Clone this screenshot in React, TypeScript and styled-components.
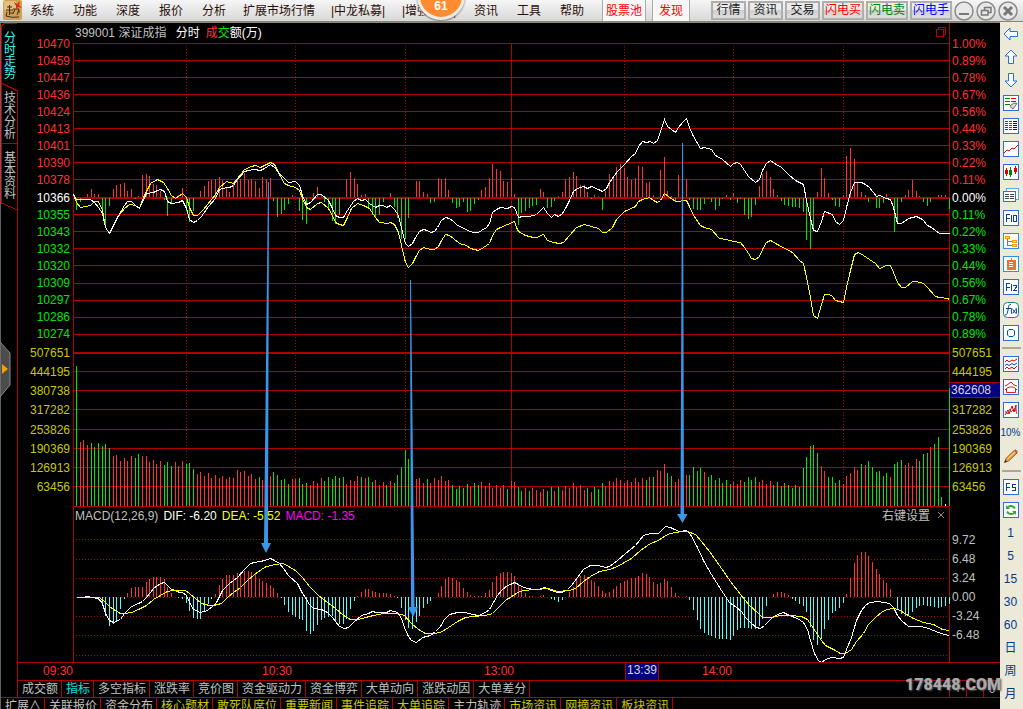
import React from "react";
import styled, { createGlobalStyle } from "styled-components";

const RED = "#b00000";

const GlobalStyle = createGlobalStyle`
  * { box-sizing: border-box; }
  html, body, #root { margin: 0; height: 100%; }
  body {
    background: #000;
    font: 12px/16px "Liberation Sans", "Noto Sans CJK SC", sans-serif;
    overflow: hidden;
  }
  button {
    font: inherit;
    color: inherit;
    background: none;
    border: 0;
    padding: 0;
    margin: 0;
    white-space: nowrap;
  }
`;

/* ---------- series data ---------- */

type Pt = [number, number];
type Run = { x: number; y: number; pts: number[] };

/* Samples are stored per run, in thirds of a pixel from the run's origin. */
const unpack = (runs: Run[]): Pt[] => {
  const out: Pt[] = [];
  runs.forEach((r) => {
    for (let i = 0; i < r.pts.length; i += 2) {
      const x = r.x + r.pts[i] / 3;
      if (!out.length || x > out[out.length - 1][0]) out.push([x, r.y + r.pts[i + 1] / 3]);
    }
  });
  return out;
};

const at = (pts: Pt[], x: number): number => {
  if (x <= pts[0][0]) return pts[0][1];
  for (let i = 1; i < pts.length; i++) {
    const [ax, ay] = pts[i - 1];
    const [bx, by] = pts[i];
    if (x <= bx) return ay + ((by - ay) * (x - ax)) / (bx - ax);
  }
  return pts[pts.length - 1][1];
};

const toPoints = (pts: Pt[]) =>
  pts.map(([x, y]) => `${Math.round(x) + 0.5},${Math.round(y) + 0.5}`).join(" ");

const priceLine = unpack([
  { x: 70, y: 130, pts: [10,192,19,207,31,206,60,206,73,215,85,231,97,248,106,292,118,308,130,285,142,262,163,225,172,212,184,212,196,224,206,234,217,212,229,190,250,186,262,180,271,178,283,183,292,212,304,218,325,216,337,209,349,235,358,268,370,276,382,270,394,258,415,228,436,205,448,177,469,170,478,171,490,165,502,147,523,123,535,121,553,118,571,121,583,113,601,103,613,110,628,130,655,157,676,154,688,165,697,195,709,222,721,216,742,193,754,193,775,210,787,235,796,255,808,262,820,262,832,240,850,213,862,205,874,210,886,206,898,220,916,230,928,225] },
  { x: 380, y: 100, pts: [10,314,19,321,31,314,43,328,54,346,64,385,76,430,85,438,97,430,106,410,118,393,130,388,142,390,151,396,163,393,172,380,184,360,196,352,208,353,218,364,232,374,246,380,262,390,280,395,295,397,304,391,318,380,328,370,337,336,349,328,361,320,382,325,394,317,403,320,409,335,415,350,427,347,448,349,469,343,490,322,502,340,514,351,523,343,535,348,547,340,556,325,568,300,580,273,592,263,610,258,622,264,634,257,655,266,667,273,679,263,688,245,712,212,733,192,754,168,766,160,775,138,787,122,799,126,811,124,820,129,832,120,841,92] },
  { x: 660, y: 100, pts: [13,58,22,78,34,88,46,96,55,80,67,65,79,53,88,80,100,108,121,145,133,142,154,148,166,165,187,178,211,198,220,190,232,186,241,192,253,210,265,228,286,246,298,237,307,210,319,188,331,181,343,189,364,202,385,222,406,240,430,252,439,300,451,355,460,390,472,393,484,362,493,334,517,343,526,363,538,373,550,360,559,320,571,275,583,245,604,247,616,251,628,262,649,287,658,284,679,293,691,297,700,320,712,370,724,370,745,355,769,348,787,358,802,376,814,382,838,400,867,400] },
]);

const averageLine = unpack([
  { x: 70, y: 130, pts: [10,192,19,215,31,232,60,226,73,212,85,212,97,240,106,290,118,310,130,288,142,262,163,235,178,222,196,226,206,235,220,200,240,158,262,148,280,155,292,175,304,195,316,203,337,190,349,200,358,232,370,254,382,256,400,236,436,192,448,170,469,154,490,160,502,143,523,118,544,107,556,106,571,112,589,102,601,97,613,103,628,132,643,160,655,165,676,170,688,180,697,205,709,232,721,236,742,220,754,217,775,235,787,255,796,275,808,283,820,284,832,262,844,235,862,220,880,224,898,235,916,262,928,276] },
  { x: 380, y: 100, pts: [0,367,22,370,31,366,43,372,54,396,64,435,76,485,85,501,97,490,106,470,118,449,130,442,151,448,163,447,175,438,184,420,196,403,208,404,218,414,238,429,258,436,271,445,295,450,310,440,328,428,337,404,349,388,361,380,382,373,403,364,409,380,415,392,436,405,460,410,469,411,490,403,502,420,520,427,536,430,550,426,568,405,589,381,613,371,634,378,655,383,667,397,679,396,697,380,709,358,733,334,766,319,775,303,787,296,808,292,820,299,832,306,841,300] },
  { x: 660, y: 100, pts: [13,279,25,288,46,303,79,301,88,318,100,345,121,376,133,381,154,386,178,414,199,416,220,424,241,427,253,442,265,460,274,474,286,478,298,468,307,448,319,427,331,420,352,431,397,456,418,480,430,490,439,530,451,590,460,646,472,654,484,612,493,583,508,583,517,588,526,600,550,605,559,560,571,510,583,463,595,457,610,466,637,484,646,490,658,505,679,496,691,496,700,515,712,545,724,562,736,562,757,544,769,544,790,550,800,562,826,589,838,592,862,593,867,596] },
]);

const difLine = unpack([
  { x: 70, y: 500, pts: [18,292,40,291,52,289,64,292,85,295,97,310,106,338,118,360,130,367,151,358,163,340,184,317,205,310,217,303,229,290,250,265,271,250,283,245,292,255,304,266,316,271,328,275,337,276,349,285,358,305,370,327,391,336,412,330,430,315,439,305,448,287,457,270,478,248,502,232,523,207,541,190,553,185,571,183,583,179,601,175,613,180,628,188,640,203,655,224,682,250,697,278,706,292,718,312,730,323,754,328,772,336,787,352,796,364,808,377,823,385,835,381,850,365,874,345,895,338,907,333,918,337,949,335,961,331,982,336,994,355,1003,380,1015,408,1024,420,1039,425,1057,411,1081,404,1096,394,1111,377,1123,358,1138,343,1160,335,1186,335,1207,342,1225,344,1246,336,1258,328,1270,305,1282,285,1297,268,1312,256] },
  { x: 510, y: 500, pts: [0,252,13,247,25,253,40,261,70,267,85,267,103,262,124,270,142,276,157,276,172,268,184,256,202,230,220,208,241,196,265,196,286,202,298,199,322,180,346,160,376,135,400,105,420,99,445,100,466,79,481,80,493,87,508,94,529,91,541,102,562,140,580,180,604,223,634,270,658,305,679,322,694,333,706,352,724,368,739,382,751,383,763,376,787,350,800,342,820,337,838,344,862,354,880,366,892,388,901,420,913,460,925,480,934,486,946,478,964,472,988,475,1000,470,1009,446,1024,410,1039,360,1054,330,1066,315,1078,306,1105,304,1138,310,1150,320,1162,345,1174,361,1195,378,1216,379,1234,377,1255,383,1285,395,1303,402,1317,404] },
]);

const deaLine = unpack([
  { x: 70, y: 500, pts: [18,292,60,290,88,292,106,305,118,317,130,328,151,338,163,340,184,335,205,326,229,315,250,298,271,284,292,272,310,269,345,271,358,278,376,294,394,310,418,316,430,315,454,308,472,292,490,277,511,262,532,240,553,222,574,207,589,199,616,191,640,190,655,197,676,210,697,231,718,258,745,285,772,306,796,324,820,345,841,357,865,357,886,350,910,345,940,340,982,338,1003,345,1024,368,1045,388,1066,398,1090,400,1111,396,1135,380,1160,363,1186,351,1210,347,1246,345,1267,338,1288,317,1309,298] },
  { x: 510, y: 500, pts: [0,292,20,276,40,269,75,268,115,265,142,272,178,270,196,264,220,244,241,228,268,212,298,208,322,199,364,175,391,150,420,128,445,119,466,105,481,98,514,94,532,94,556,101,574,124,598,152,628,195,661,243,691,283,718,316,745,340,757,350,787,352,808,346,840,344,874,348,892,358,910,384,934,420,946,434,970,448,991,458,1006,460,1024,448,1039,424,1060,400,1075,372,1096,350,1117,333,1132,326,1150,324,1165,328,1189,343,1210,355,1240,366,1270,373,1297,386,1317,391] },
]);

const macdEnvelope = unpack([
  { x: 70, y: 0, pts: [18,0,76,0,85,-10,97,-27,106,-58,118,-86,130,-80,139,-72,151,-36,163,-6,172,13,184,27,196,31,205,29,217,31,229,45,238,55,250,59,262,61,271,60,283,55,292,30,304,13,316,0,325,-3,337,-7,349,-18,358,-42,370,-64,382,-67,391,-65,403,-46,415,-22,424,-7,436,10,448,36,457,55,469,65,478,67,490,66,502,72,523,79,535,79,544,75,556,68,568,54,577,48,589,42,601,36,610,27,622,12,634,-3,643,-25,655,-45,667,-54,676,-59,697,-70,709,-103,721,-110,730,-103,742,-84,754,-68,763,-64,787,-58,796,-75,808,-80,820,-80,832,-62,841,-36,853,-12,862,3,874,16,886,25,898,25,907,18,920,12,943,12,964,8,976,3,982,-4,994,-32,1006,-70,1015,-92,1027,-95,1039,-76,1048,-56,1060,-33,1072,-20,1081,-12,1093,0,1105,12,1114,34,1126,55,1135,61,1147,58,1159,52,1171,42,1180,28,1192,15,1201,6,1213,4,1234,4,1246,12,1258,22,1267,45,1279,62,1291,72,1300,76,1312,74] },
  { x: 510, y: 0, pts: [4,72,13,64,25,40,37,22,46,12,58,4,79,0,100,6,112,1,124,-7,133,-8,145,-14,157,-10,166,0,178,14,190,30,199,50,211,64,223,66,232,60,244,52,253,46,265,32,277,18,286,12,298,14,310,24,319,32,331,42,343,48,352,52,364,56,376,58,388,66,397,73,409,70,421,58,430,46,442,38,454,42,463,55,475,46,484,30,496,12,505,3,520,0,529,4,538,-10,550,-38,562,-68,571,-96,583,-108,604,-118,628,-126,661,-128,670,-118,682,-100,694,-92,706,-92,724,-97,736,-95,748,-88,760,-60,769,-28,780,0,790,10,802,16,820,15,832,7,841,0,856,-13,868,-20,880,-27,892,-50,901,-90,910,-128,922,-145,934,-125,943,-95,955,-70,964,-50,976,-42,988,-34,1000,-18,1009,10,1021,58,1033,102,1042,126,1054,136,1066,136,1075,124,1087,105,1099,84,1108,68,1120,50,1132,38,1141,25,1153,0,1162,-35,1174,-52,1186,-56,1195,-58,1207,-45,1219,-34,1228,-27,1240,-24,1261,-28,1288,-32,1303,-30,1318,-22] },
]);

/* x, signed height: positive rises in red, negative falls in green */
const momentum = [
  76,-12,80,-4,87,3,91,8,94,3,98,3,102,-12,105,-27,109,-8,113,8,116,12,120,13,124,14,127,6,131,8,135,-1,138,1,142,22,146,23,149,21,153,13,156,12,160,6,164,-2,167,-18,171,-6,175,-1,178,2,182,9,186,-13,189,-24,193,-13,200,6,204,11,208,16,211,17,215,18,219,20,222,17,226,9,229,5,233,15,237,18,240,18,244,24,248,17,251,18,255,16,259,9,262,20,266,18,270,19,273,-3,277,-19,281,-16,284,-12,288,-6,292,2,299,-13,302,-22,306,-26,313,4,317,10,321,2,324,-4,328,-11,332,-23,335,-26,339,-17,346,18,350,25,354,19,357,13,361,2,365,3,368,-10,372,-17,375,-19,379,-17,383,-4,390,4,394,-9,397,-20,401,-41,405,-41,408,-20,416,16,419,16,423,5,427,3,430,-5,434,-4,438,19,441,18,445,19,448,7,452,-5,456,-10,459,-9,463,-4,467,-14,470,-13,474,-6,478,-2,481,7,485,10,489,19,492,33,496,28,500,26,503,16,507,15,511,19,514,3,518,-27,521,-15,525,-13,529,-10,532,-8,536,-7,540,8,543,5,547,-10,551,-9,554,-3,558,1,562,5,565,18,569,20,573,25,576,21,580,12,584,12,587,5,591,-1,594,2,598,1,602,-12,605,6,609,23,613,19,616,30,620,33,624,29,627,20,631,17,635,19,638,31,642,30,646,14,649,15,653,2,657,-1,660,27,664,40,667,6,671,1,675,-3,678,22,682,30,686,18,689,-2,693,-11,697,-12,700,-12,704,-6,708,-1,711,-4,715,-12,719,-8,722,-1,726,2,730,-2,733,4,737,-5,740,-1,744,-17,748,-21,751,-19,755,-7,759,11,762,23,766,26,770,20,773,8,777,2,781,-3,784,-7,788,-8,792,-9,795,-9,799,-10,803,-14,806,-42,810,-51,813,-32,817,5,821,29,824,19,828,4,832,-2,835,-8,839,-9,843,2,846,41,850,49,854,38,857,15,861,5,865,2,868,-4,876,-10,879,-10,883,-5,886,3,894,-34,897,-25,901,-4,905,2,908,7,912,17,916,6,919,1,923,-4,927,-8,930,-4,938,2,941,2,945,2,949,-11,
];

const volumeTops: Pt[] = [
  [76,366],[79,440],[90,446],[100,446],[109,448],[113,453],[122,460],[130,457],[142,454],[150,461],[160,463],[172,465],[186,464],[195,471],[212,475],[230,478],[240,470],[248,475],[260,480],[275,474],[290,482],[295,476],[306,484],[320,480],[340,477],[347,484],[365,475],[380,483],[395,481],[400,468],[405,452],[409,458],[413,476],[425,483],[440,479],[455,486],[480,483],[492,486],[507,488],[514,481],[518,490],[532,491],[547,488],[562,488],[575,485],[590,491],[602,486],[620,480],[640,479],[650,478],[657,472],[664,466],[672,480],[682,482],[693,470],[704,472],[720,479],[733,483],[751,478],[762,482],[780,486],[800,484],[806,454],[813,442],[817,454],[824,472],[835,481],[843,483],[850,472],[868,464],[880,472],[890,474],[897,459],[910,465],[923,456],[930,449],[938,437],[941,497],[945,504],[949,388],
];

const minuteX = Array.from({ length: 240 }, (_, i) => Math.floor(73 + 3.65 * (i + 1)));

const bar = (x: number, y1: number, y2: number) => `M${x + 0.5} ${y1}V${y2}`;

const momentumPath = (up: boolean) => {
  let d = "";
  for (let i = 0; i < momentum.length; i += 2) {
    const v = momentum[i + 1];
    if (up && v > 0) d += bar(momentum[i], 197 - v, 197);
    if (!up && v < 0) d += bar(momentum[i], 198, 198 - v);
  }
  return d;
};

const volumePath = (up: boolean) =>
  minuteX
    .filter((x) => {
      const rising = x < 944 && x > 77 && at(priceLine, x) <= at(priceLine, x - 4) + ((x * 7) % 5 === 0 ? 3 : 0);
      return rising === up;
    })
    .map((x) => {
      const jitter = x > 79 && x < 935 ? ((x * 13) % 7) - 3 : 0;
      return bar(x, Math.round(at(volumeTops, x)) + jitter, 506);
    })
    .join("");

const macdPath = (up: boolean) =>
  minuteX
    .map((x) => {
      const v = Math.round(at(macdEnvelope, x + 0.3)) || 0;
      if (v === 0 || v > 0 !== up) return "";
      return bar(x, 597, 597 - v);
    })
    .join("");

const h = (ys: number[]) => ys.map((y) => `M73 ${y + 0.5}H949`).join("");
const v = (xs: number[]) => xs.map((x) => `M${x + 0.5} 43V506`).join("");

const priceGrid = [43, 60, 77, 94, 111, 128, 145, 162, 179, 214, 231, 248, 265, 283, 300, 317, 334];
const volumeGrid = [371, 390, 409, 429, 448, 467, 486, 506];
const macdGrid = [539, 559, 578, 597, 616, 635, 655];

/* ---------- menu bar ---------- */

const Window = styled.div`
  display: flex;
  flex-direction: column;
  width: 100%;
  height: 100vh;
  overflow: hidden;
  background: #000;
`;

const MenuBar = styled.header`
  display: flex;
  flex: none;
  align-items: stretch;
  height: 23px;
  padding-left: 3px;
  color: #2c0f0a;
  background: linear-gradient(#f6f6f6, #d8d8d8);
  border-bottom: 2px solid #8a8676;
`;

const Menu = styled.nav`
  display: flex;
  gap: 15px;
  padding-left: 6px;
`;

const MenuItem = styled.button<{ $wide?: boolean }>`
  position: relative;
  min-width: ${(p) => (p.$wide ? 56 : 28)}px;
`;

const Badge = styled.span`
  position: absolute;
  top: -28px;
  left: 16px;
  width: 48px;
  height: 48px;
  padding-top: 24px;
  border: 3px solid #f2ece6;
  border-radius: 50%;
  background: #ff8c2e;
  box-shadow: 0 1px 2px #777;
  color: #fff;
  font-weight: bold;
  line-height: 14px;
`;

const Pins = styled.div`
  display: flex;
  gap: 6px;
  margin-left: 16px;
  color: #f00;
`;

const Pin = styled.button`
  padding: 0 3px;
  background: #f8f8f8;
  border: solid #aaa;
  border-width: 0 1px;
  &:last-child { padding: 0 6px; }
`;

const Actions = styled.div`
  display: flex;
  gap: 2px;
  align-items: center;
  margin-left: auto;
  padding-right: 5px;
`;

const Action = styled.button<{ $color: string }>`
  height: 19px;
  width: ${(p) => (p.$color === "#222" ? 35 : 42)}px;
  border: 2px solid #aeaeae;
  background: linear-gradient(#ececec 50%, #cfcfcf 50%, #dedede);
  color: ${(p) => p.$color};
  line-height: 15px;
`;

const RoundButton = styled.button`
  width: 20px;
  height: 20px;
  svg { display: block; }
`;

/* ---------- frame ---------- */

const Body = styled.div`
  display: flex;
  flex: 1;
  min-height: 0;
`;

const Workspace = styled.div`
  display: flex;
  flex: 1;
  flex-direction: column;
  min-width: 0;
  border-left: 1px solid #606060;
`;

const Upper = styled.div`
  display: flex;
  flex: 1;
  min-height: 0;
`;

const SideTabs = styled.nav`
  position: relative;
  display: flex;
  flex: none;
  flex-direction: column;
  width: 17px;
  gap: 12px;
  padding-top: 9px;
`;

const SideFrame = styled.svg`
  position: absolute;
  top: 0;
  left: 0;
  width: 17px;
  height: 100%;
`;

const SideTab = styled.button<{ $active?: boolean }>`
  position: relative;
  width: 12px;
  margin-left: 3px;
  color: ${(p) => (p.$active ? "#3cf0f0" : "#c0c0c0")};
  line-height: 12px;
  white-space: normal;
  word-break: break-all;
`;

const Handle = styled.button`
  position: absolute;
  top: 319px;
  left: -1px;
  height: 56px;
  svg { display: block; }
`;

const Main = styled.main`
  display: flex;
  flex: 1;
  flex-direction: column;
  min-width: 0;
`;

const TitleRow = styled.div`
  display: grid;
  flex: none;
  grid-template-columns: 55px 1fr 50px;
  height: 20px;
`;

const Title = styled.h1`
  display: flex;
  gap: 6px;
  grid-column: 2;
  margin: 0;
  padding: 2px 2px 0;
  border-right: 1px solid ${RED};
  color: #c0c0c0;
  font: inherit;
  svg { margin: 1px 0 0 auto; }
`;

const Ink = styled.span<{ $color: string }>`
  color: ${(p) => p.$color};
`;

const Chart = styled.section`
  display: grid;
  flex: 1;
  grid-template-columns: 55px 1fr 50px;
  min-height: 0;
`;

const Plot = styled.div`
  position: relative;
  min-height: 0;
`;

const PlotSvg = styled.svg`
  position: absolute;
  width: 100%;
  height: 100%;
`;

const Legend = styled.div`
  position: absolute;
  top: 75%;
  right: 4px;
  left: 2px;
  display: flex;
  gap: 5px;
  padding-top: 1px;
  color: #c0c0c0;
`;

const LegendTools = styled.div`
  display: flex;
  gap: 6px;
  margin-left: auto;
`;

const Axis = styled.div<{ $side: "left" | "right" }>`
  display: grid;
  grid-template-rows: 308fr 154fr 33fr 115fr 17fr;
  min-height: 0;
  margin-top: -8px;
  text-align: ${(p) => (p.$side === "left" ? "right" : "left")};
`;

const Scale = styled.div`
  display: flex;
  flex-direction: column;
  min-height: 0;
  &:nth-child(3) { grid-row: 4; }
`;

const Tick = styled.div<{ $color: string }>`
  display: flex;
  flex: 1;
  flex-direction: column;
  justify-content: center;
  min-height: 0;
  padding: 0 3px 0 2px;
  color: ${(p) => p.$color};
`;

const CursorTick = styled.div`
  flex: 1;
  min-height: 0;
  color: #d8d8d8;
  span {
    display: block;
    height: 16px;
    padding-left: 1px;
    border: solid ${RED};
    border-width: 1px 0;
    background: #000080;
    line-height: 14px;
  }
`;

const TimeAxis = styled.div`
  display: grid;
  flex: none;
  grid-template-columns: 25px 219fr 222fr 141fr 77fr 298fr;
  height: 18px;
  border-top: 1px solid ${RED};
  color: #ff3232;
  line-height: 17px;
  span:first-child { grid-column: 2; }
`;

const CursorTime = styled.span`
  justify-self: start;
  padding: 0 1px;
  border: solid ${RED};
  border-width: 0 1px;
  background: #000080;
  color: #d8d8d8;
  line-height: 15px;
`;

const TabRow = styled.nav`
  display: flex;
  flex: none;
  height: 17px;
  border-top: 1px solid ${RED};
`;

const FootRow = styled(TabRow)`
  height: 12px;
  overflow: hidden;
`;

const Tab = styled.button<{ $color?: string }>`
  height: 16px;
  padding: 0 3px 0 4px;
  border-right: 1px solid ${RED};
  color: ${(p) => p.$color ?? "#c0c0c0"};
  line-height: 16px;
`;

const Zoomers = styled.div`
  position: relative;
  display: flex;
  width: 51px;
  margin-left: auto;
  border-left: 1px solid ${RED};
  color: #d0d0d0;
`;

const ZoomButton = styled.button`
  flex: 1;
  & + & { border-left: 1px solid ${RED}; }
`;

const Watermark = styled.span`
  position: absolute;
  right: -1px;
  bottom: 0;
  color: #a9a9a9;
  font: 900 16px/24px Roboto, "Liberation Sans", sans-serif;
  text-shadow: 1px 1px 2px #555;
  pointer-events: none;
`;

/* ---------- tool strip ---------- */

const ToolStrip = styled.aside`
  display: flex;
  flex: none;
  flex-direction: column;
  width: 23px;
  margin-top: -1px;
  background: #ece9d8;
  color: #003c8c;
`;

const Tool = styled.button<{ $small?: boolean }>`
  flex: none;
  width: 21px;
  height: 23px;
  font-size: ${(p) => (p.$small ? 10 : 12)}px;
  svg { display: block; margin: 0 auto; }
`;

const ToolRule = styled.hr`
  flex: none;
  width: 19px;
  height: 2px;
  margin: 3px 2px;
  border: 0;
  background: #aca899;
`;

const PERIOD_TOOLS = ["1", "5", "15", "30", "60", "日", "周", "月"];

const Frame = ({ children, stroke = "#2a6fe0" }: { children?: React.ReactNode; stroke?: string }) => (
  <svg width="16" height="16" viewBox="0 0 16 16" fill="none" shapeRendering="crispEdges">
    <rect x="0.5" y="0.5" width="15" height="15" fill="#fff" stroke={stroke} />
    {children}
  </svg>
);

const Arrow = ({ turn }: { turn: number }) => (
  <svg width="16" height="16" viewBox="0 0 16 16">
    <path
      d="M1 8L7 2V5.500H14.500V10.500H7V14Z"
      fill="#fff"
      stroke="#2a6fe0"
      transform={`rotate(${turn} 8 8)`}
    />
  </svg>
);

const KeyIcon = ({ path }: { path: string }) => (
  <Frame>
    <path d={path} stroke="#0a3c9c" />
  </Frame>
);

const F_STROKE = "M3.500 12V4.500H7M3.500 8.500H7";

const icons: { name: string; icon: React.ReactNode }[][] = [
  [
    { name: "后退", icon: <Arrow turn={0} /> },
    { name: "向上", icon: <Arrow turn={90} /> },
    { name: "向下", icon: <Arrow turn={270} /> },
    {
      name: "报价设置",
      icon: (
        <Frame>
          <path d="M2 3.500H7M2 6.500H7M2 9.500H7" stroke="#008000" />
          <path d="M8 3.500H13M8 6.500H13" stroke="#e00000" />
          <path d="M7 11.500L10 14L14 8.500L11 8L8 10Z" fill="#ddd" stroke="#666" shapeRendering="auto" />
        </Frame>
      ),
    },
    {
      name: "行情列表",
      icon: (
        <Frame>
          <path d="M2 3.500H5M2 5.500H5M2 7.500H5M2 9.500H5M2 11.500H5" stroke="#d00000" />
          <path d="M6 3.500H9M6 5.500H9M6 7.500H9M6 9.500H9M6 11.500H9" stroke="#008000" />
          <path d="M10 3.500H14M10 5.500H14M10 7.500H14M10 9.500H14M10 11.500H14" stroke="#0000c0" />
        </Frame>
      ),
    },
    { name: "分时图", icon: <Frame><path shapeRendering="auto" d="M1 12L4 9L6 10L9 7L11 8L15 4" stroke="#e00000" /></Frame> },
    {
      name: "K线图",
      icon: (
        <Frame>
          <path d="M3.500 4V12M12.500 2V10" stroke="#e00000" />
          <path d="M2 6H5V10H2ZM11 4H14V8H11Z" fill="#e00000" />
          <path d="M7.500 3V13" stroke="#008000" />
          <path d="M6 6H9V11H6Z" fill="#008000" />
        </Frame>
      ),
    },
    {
      name: "多窗口",
      icon: (
        <svg width="16" height="16" viewBox="0 0 16 16" fill="#fff" shapeRendering="crispEdges">
          <path d="M3.500 4V1.500H15.500V12.500H13" stroke="#5fa8e8" />
          <rect x="0.5" y="4.5" width="12" height="10" stroke="#2a6fe0" />
          <path d="M2 7.500H6M7 7.500H11M2 9.500H6M7 9.500H11M2 11.500H6M7 11.500H11" stroke="#444" />
        </svg>
      ),
    },
    { name: "F10 资料", icon: <KeyIcon path={`${F_STROKE}M8.500 5V12M10.500 5.500H13.500V11.500H10.500Z`} /> },
    {
      name: "板块树",
      icon: (
        <Frame stroke="#2a90f0">
          <path d="M4.500 5V12.500H9M4.500 8.500H9" stroke="#777" />
          <path d="M2.500 3.500H6.500V5.500H2.500ZM9.500 7.500H13.500V9.500H9.500ZM9.500 11.500H13.500V13.500H9.500Z" fill="#ffe08a" stroke="#f0a000" />
        </Frame>
      ),
    },
    {
      name: "自选股",
      icon: (
        <Frame stroke="#2a90f0">
          <path d="M8 2V4M4 4H12V13H4Z" fill="#f07030" stroke="#f07030" />
          <path d="M6 6.500H10M6 8.500H10M6 10.500H10" stroke="#fff" />
        </Frame>
      ),
    },
    { name: "F12 交易", icon: <KeyIcon path={`${F_STROKE}M8.500 5V12M10 6.500H13.500V8L10.500 11.500H14`} /> },
    {
      name: "公式",
      icon: (
        <svg width="16" height="16" viewBox="0 0 16 16" fill="none">
          <rect x="0.5" y="0.5" width="15" height="15" rx="4" fill="#fff" stroke="#138080" />
          <path d="M8 2.500C5.500 2 5.500 5 5 8S4 13 2 13M3 6.500H8M9 6Q7.500 9 9 12M13 6Q14.500 9 13 12M10 7.500L12.500 11M12.500 7.500L10 11" stroke="#0a3c9c" />
        </svg>
      ),
    },
    {
      name: "区间统计",
      icon: <Frame><path shapeRendering="auto" d="M6 4.500H10L11.500 6V10L10 11.500H6L4.500 10V6Z" stroke="#0050b0" /></Frame>,
    },
  ],
  [
    {
      name: "叠加走势",
      icon: (
        <Frame>
          <g shapeRendering="auto">
            <path d="M2 6L4 4L6 6L9 4L11 5L14 3M2 13L4 11L6 13L9 11L11 13L14 10" stroke="#e00000" />
            <path d="M2 9.500L4 8L6 9.500L9 7.500L11 9L14 7" stroke="#0040d0" />
          </g>
        </Frame>
      ),
    },
    {
      name: "区域图",
      icon: (
        <Frame>
          <path shapeRendering="auto" d="M2 7L4 6L8 3L11 6L14 7M2 11L4 9L7 8L10 8L12 9L14 11M3.500 10V13.500H12.500V10" stroke="#e02020" />
        </Frame>
      ),
    },
    {
      name: "波动图",
      icon: (
        <Frame>
          <g shapeRendering="auto">
            <path d="M2 13L5 8L6 12L9 4L11 10L13 3V9" stroke="#e00000" />
            <path d="M2 9L4 12L7 7L8 10L12 6L14 12" stroke="#b04040" />
          </g>
        </Frame>
      ),
    },
    { name: "百分比坐标", icon: "10%" },
    {
      name: "画线",
      icon: (
        <svg width="16" height="16" viewBox="0 0 16 16">
          <path d="M1.500 14.500L3 10.500L11 2.500L14 5L5.500 13Z" fill="#f0a040" stroke="#8a5a20" />
          <path d="M11 2.500L12.500 1.200L15 3.700L14 5Z" fill="#d05050" />
          <path d="M1.500 14.500L2.500 12L4 13.500Z" fill="#222" />
          <path d="M4.500 11L12 3.700" stroke="#ffe2a0" />
        </svg>
      ),
    },
  ],
  [
    { name: "F5 切换", icon: <KeyIcon path={`${F_STROKE}M13 5.500H9.500V8.500H12.500V11.500H9`} /> },
    {
      name: "刷新",
      icon: (
        <Frame>
          <g shapeRendering="auto" stroke="#35a835" strokeWidth="2">
            <path d="M12 6.500C10.500 3.500 6.500 3 4.500 5.500M4 9.500C5.500 12.500 9.500 13 11.500 10.500" />
            <path d="M3 3V7H7ZM13 13V9H9Z" fill="#35a835" stroke="none" />
          </g>
        </Frame>
      ),
    },
  ],
];

/* ---------- labels ---------- */

const leftPrice = ["10470","10459","10447","10436","10424","10413","10401","10390","10378","10366","10355","10343","10332","10320","10309","10297","10286","10274"];
const rightPct = ["1.00%","0.89%","0.78%","0.67%","0.56%","0.44%","0.33%","0.22%","0.11%","0.00%","0.11%","0.22%","0.33%","0.44%","0.56%","0.67%","0.78%","0.89%"];
const volumes = ["507651","444195","380738","317282","253826","190369","126913","63456"];
const macdTicks = ["9.72", "6.48", "3.24", "0.00", "-3.24", "-6.48"];

const toneFor = (i: number) => (i < 9 ? "#ff3232" : i === 9 ? "#fff" : "#00e600");

const PriceScale = ({ labels }: { labels: string[] }) => (
  <Scale>
    {labels.map((t, i) => (
      <Tick key={i} $color={toneFor(i)}>{t}</Tick>
    ))}
  </Scale>
);

const Y = "#c8c800";
const footTabs: [string, string?][] = [
  ["扩展∧"], ["关联报价"], ["资金分布"], ["核心题材", Y], ["敢死队席位", Y], ["重要新闻", Y],
  ["事件追踪", Y], ["大单追踪", Y], ["主力轨迹"], ["市场资讯", Y], ["网摘资讯", Y], ["板块资讯", Y],
];
const indicatorTabs = ["成交额", "指标", "多空指标", "涨跌率", "竞价图", "资金驱动力", "资金博弈", "大单动向", "涨跌动因", "大单差分"];

const Logo = () => (
  <svg width="19" height="20" viewBox="0 0 19 20" fill="none">
    <rect width="19" height="20" rx="2" fill="#cfa052" />
    <rect x="1" y="1" width="12" height="9" fill="#e2bf7c" />
    <path d="M4 7H9M6.500 5V12M3 10H10M6.500 12V15M6.500 13H10M4 12L3 16M3 16Q8 18 16 17" stroke="#4a2c18" />
    <path d="M10 9H16L14 15M12 9L10 14M16 10V13" stroke="#4a2c18" />
    <path d="M11 2L14 4L17 1L16 5L19 8L15 7L13 10L13 6Z" fill="#e02818" />
  </svg>
);

const PlotDrawing = () => (
  <PlotSvg viewBox="73 43 877 619" preserveAspectRatio="none" fill="none" aria-label="分时走势图">
    <g shapeRendering="crispEdges">
      <path d={h([...priceGrid, ...volumeGrid])} stroke={RED} />
      <path d="M73 198H949M73 353H949" stroke={RED} strokeWidth="2" />
      <path d={v([186, 295, 405, 624, 733, 843])} stroke={RED} strokeDasharray="1 2" />
      <path d="M511.500 43V506M73.500 43V662M949.500 43V662" stroke={RED} />
      <path d={macdGrid.map((y) => `M76 ${y + 0.5}H948`).join("")} stroke={RED} strokeDasharray="1 2" />
      <path d={momentumPath(true)} stroke="#ff3232" />
      <path d={momentumPath(false)} stroke="#00e600" />
      <path d={volumePath(true)} stroke="#ff3232" />
      <path d={volumePath(false)} stroke="#00e600" />
      <path d="M945.500 504V506" stroke="#fff" />
      <path d={macdPath(true)} stroke="#ff3232" />
      <path d={macdPath(false)} stroke="#54fcfc" />
      <polyline points={toPoints(averageLine)} stroke="#ffff00" />
      <polyline points={toPoints(priceLine)} stroke="#fff" />
      <polyline points={toPoints(difLine)} stroke="#fff" />
      <polyline points={toPoints(deaLine)} stroke="#ffff00" />
    </g>
  </PlotSvg>
);

const PlotArrows = () => (
  <PlotSvg viewBox="73 43 877 619" preserveAspectRatio="none" fill="#3a96e8" aria-hidden="true">
    <path d="M268 182L269 182L268 543H271L266 553L261 543H264Z" />
    <path d="M410 280L411 280L414.500 607H418L413 617L408 607H411Z" />
    <path d="M682 143L683 143L684 514H687.500L682.500 523L677 514H680.500Z" />
  </PlotSvg>
);

export default function App() {
  return (
    <Window>
      <GlobalStyle />
      <MenuBar>
        <Logo />
        <Menu>
          {["系统", "功能", "深度", "报价", "分析", "扩展市场行情"].map((t) => (
            <MenuItem key={t}>{t}</MenuItem>
          ))}
          <MenuItem $wide>|中龙私募|</MenuItem>
          <MenuItem $wide>
            |增强功能|<Badge>61</Badge>
          </MenuItem>
          {["资讯", "工具", "帮助"].map((t) => (
            <MenuItem key={t}>{t}</MenuItem>
          ))}
        </Menu>
        <Pins>
          <Pin>股票池</Pin>
          <Pin>发现</Pin>
        </Pins>
        <Actions>
          <Action $color="#222">行情</Action>
          <Action $color="#222">资讯</Action>
          <Action $color="#222">交易</Action>
          <Action $color="#f00">闪电买</Action>
          <Action $color="#008000">闪电卖</Action>
          <Action $color="#00f">闪电手</Action>
          {[
            ["最小化", "M5 13H15"],
            ["还原", "M8.500 9V6.500H15V11.500H12.500M5.500 9.500H12V14H5.500Z"],
            ["关闭", "M6 6L14 14M14 6L6 14"],
          ].map(([name, d]) => (
            <RoundButton key={name} aria-label={name}>
              <svg width="20" height="20" viewBox="0 0 20 20" fill="none" stroke="#777">
                <circle cx="10" cy="10" r="9" fill="#e8e8e8" stroke="#8c8c8c" strokeWidth="1.500" />
                <path d={d} strokeWidth={name === "关闭" ? 3 : name === "还原" ? 1.5 : 2} />
              </svg>
            </RoundButton>
          ))}
        </Actions>
      </MenuBar>

      <Body>
        <Workspace>
          <Upper>
            <SideTabs>
              <SideFrame fill="none" stroke={RED} shapeRendering="crispEdges">
                <path d="M16 0.500H3L0.500 3V60L16.500 68V2000M0.500 60V180L16.500 187M0.500 120.500H16" />
              </SideFrame>
              <SideTab $active>分时走势</SideTab>
              <SideTab>技术分析</SideTab>
              <SideTab>基本资料</SideTab>
              <Handle aria-label="展开">
                <svg width="11" height="56" viewBox="0 0 11 56">
                  <path d="M0 0L10 11V43L0 55Z" fill="#4c4c4c" stroke="#8a8a8a" />
                  <path d="M2 22L8 27L2 32Z" fill="#f0a000" />
                </svg>
              </Handle>
            </SideTabs>

            <Main>
              <TitleRow>
                <Title>
                  <span>399001 深证成指</span>
                  <Ink $color="#fff">&nbsp;分时</Ink>
                  <span>
                    <Ink $color="#ff3232">成</Ink>
                    <Ink $color="#00e600">交</Ink>
                    <Ink $color="#fff">额(万)</Ink>
                  </span>
                  <svg width="12" height="12" viewBox="0 0 12 12" fill="none" stroke={RED} shapeRendering="crispEdges">
                    <path d="M3.500 3V1.500H10.500V8.500H9M1.500 3.500H8.500V10.500H1.500Z" />
                  </svg>
                </Title>
              </TitleRow>

              <Chart>
                <Axis $side="left">
                  <PriceScale labels={leftPrice} />
                  <Scale>
                    {volumes.map((t) => (
                      <Tick key={t} $color={Y}>{t}</Tick>
                    ))}
                  </Scale>
                </Axis>
                <Plot>
                  <PlotDrawing />
                  <Legend>
                    <span>MACD(12,26,9)</span>
                    <Ink $color="#fff">DIF: -6.20</Ink>
                    <Ink $color="#ffff00">DEA: -5.52</Ink>
                    <Ink $color="#ff00ff">MACD: -1.35</Ink>
                    <LegendTools>
                      <button>右键设置</button>
                      <button aria-label="关闭指标">
                        <svg width="10" height="10" viewBox="0 0 10 10" stroke="#909090">
                          <path d="M2 2L8 8M8 2L2 8" />
                        </svg>
                      </button>
                    </LegendTools>
                  </Legend>
                  <PlotArrows />
                </Plot>
                <Axis $side="right">
                  <PriceScale labels={rightPct} />
                  <Scale>
                    {volumes.map((t, i) =>
                      i === 2 ? (
                        <CursorTick key={t}><span>362608</span></CursorTick>
                      ) : (
                        <Tick key={t} $color={Y}>{t}</Tick>
                      )
                    )}
                  </Scale>
                  <Scale>
                    {macdTicks.map((t) => (
                      <Tick key={t} $color="#c0c0c0">{t}</Tick>
                    ))}
                  </Scale>
                </Axis>
              </Chart>

              <TimeAxis>
                <span>09:30</span>
                <span>10:30</span>
                <span>13:00</span>
                <CursorTime>13:39</CursorTime>
                <span>14:00</span>
              </TimeAxis>

              <TabRow>
                {indicatorTabs.map((t) => (
                  <Tab key={t} $color={t === "指标" ? "#00e8e8" : undefined}>{t}</Tab>
                ))}
                <Zoomers>
                  <ZoomButton>+</ZoomButton>
                  <ZoomButton>-</ZoomButton>
                  <ZoomButton>0</ZoomButton>
                  <Watermark>178448.COM</Watermark>
                </Zoomers>
              </TabRow>
            </Main>
          </Upper>
          <FootRow>
            {footTabs.map(([t, c]) => (
              <Tab key={t} $color={c}>{t}</Tab>
            ))}
          </FootRow>
        </Workspace>

        <ToolStrip>
          {icons.map((group, g) => (
            <React.Fragment key={g}>
              {g > 0 && <ToolRule />}
              {group.map((t) => (
                <Tool key={t.name} aria-label={t.name} $small={t.icon === "10%"}>{t.icon}</Tool>
              ))}
            </React.Fragment>
          ))}
          {PERIOD_TOOLS.map((t) => (
            <Tool key={t}>{t}</Tool>
          ))}
        </ToolStrip>
      </Body>
    </Window>
  );
}
